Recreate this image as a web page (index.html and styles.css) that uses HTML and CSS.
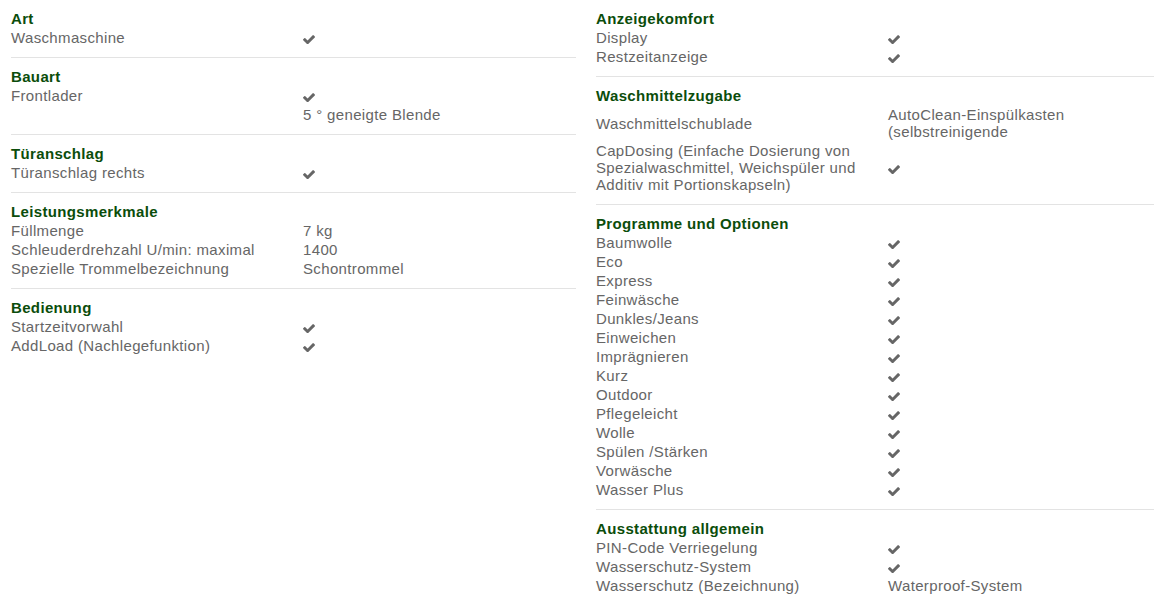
FILE: index.html
```html
<!DOCTYPE html>
<html lang="de">
<head>
<meta charset="utf-8">
<title>Technische Daten</title>
<link rel="stylesheet" href="styles.css">
</head>
<body>
<svg style="display:none" xmlns="http://www.w3.org/2000/svg">
  <symbol id="chk" viewBox="121 370 1550 1056"><path d="M1671 566q0 40-28 68l-724 724-136 136q-28 28-68 28t-68-28l-136-136-362-362q-28-28-28-68t28-68l136-136q28-28 68-28t68 28l294 295 656-657q28-28 68-28t68 28l136 136q28 28 28 68z"/></symbol>
</svg>
<div class="specs">
  <div class="col">
    <section class="group">
      <h3>Art</h3>
      <div class="row"><div class="label">Waschmaschine</div><div class="value"><svg class="check"><use href="#chk"/></svg></div></div>
    </section>
    <section class="group">
      <h3>Bauart</h3>
      <div class="row"><div class="label">Frontlader</div><div class="value"><svg class="check"><use href="#chk"/></svg></div></div>
      <div class="row"><div class="label"></div><div class="value">5 ° geneigte Blende</div></div>
    </section>
    <section class="group">
      <h3>Türanschlag</h3>
      <div class="row"><div class="label">Türanschlag rechts</div><div class="value"><svg class="check"><use href="#chk"/></svg></div></div>
    </section>
    <section class="group">
      <h3>Leistungsmerkmale</h3>
      <div class="row"><div class="label">Füllmenge</div><div class="value">7 kg</div></div>
      <div class="row"><div class="label">Schleuderdrehzahl U/min: maximal</div><div class="value">1400</div></div>
      <div class="row"><div class="label">Spezielle Trommelbezeichnung</div><div class="value">Schontrommel</div></div>
    </section>
    <section class="group">
      <h3>Bedienung</h3>
      <div class="row"><div class="label">Startzeitvorwahl</div><div class="value"><svg class="check"><use href="#chk"/></svg></div></div>
      <div class="row"><div class="label">AddLoad (Nachlegefunktion)</div><div class="value"><svg class="check"><use href="#chk"/></svg></div></div>
    </section>
  </div>
  <div class="col">
    <section class="group">
      <h3>Anzeigekomfort</h3>
      <div class="row"><div class="label">Display</div><div class="value"><svg class="check"><use href="#chk"/></svg></div></div>
      <div class="row"><div class="label">Restzeitanzeige</div><div class="value"><svg class="check"><use href="#chk"/></svg></div></div>
    </section>
    <section class="group">
      <h3>Waschmittelzugabe</h3>
      <div class="row"><div class="label">Waschmittelschublade</div><div class="value">AutoClean-Einspülkasten (selbstreinigende</div></div>
      <div class="row"><div class="label">CapDosing (Einfache Dosierung von Spezialwaschmittel, Weichspüler und Additiv mit Portionskapseln)</div><div class="value"><svg class="check"><use href="#chk"/></svg></div></div>
    </section>
    <section class="group">
      <h3>Programme und Optionen</h3>
      <div class="row"><div class="label">Baumwolle</div><div class="value"><svg class="check"><use href="#chk"/></svg></div></div>
      <div class="row"><div class="label">Eco</div><div class="value"><svg class="check"><use href="#chk"/></svg></div></div>
      <div class="row"><div class="label">Express</div><div class="value"><svg class="check"><use href="#chk"/></svg></div></div>
      <div class="row"><div class="label">Feinwäsche</div><div class="value"><svg class="check"><use href="#chk"/></svg></div></div>
      <div class="row"><div class="label">Dunkles/Jeans</div><div class="value"><svg class="check"><use href="#chk"/></svg></div></div>
      <div class="row"><div class="label">Einweichen</div><div class="value"><svg class="check"><use href="#chk"/></svg></div></div>
      <div class="row"><div class="label">Imprägnieren</div><div class="value"><svg class="check"><use href="#chk"/></svg></div></div>
      <div class="row"><div class="label">Kurz</div><div class="value"><svg class="check"><use href="#chk"/></svg></div></div>
      <div class="row"><div class="label">Outdoor</div><div class="value"><svg class="check"><use href="#chk"/></svg></div></div>
      <div class="row"><div class="label">Pflegeleicht</div><div class="value"><svg class="check"><use href="#chk"/></svg></div></div>
      <div class="row"><div class="label">Wolle</div><div class="value"><svg class="check"><use href="#chk"/></svg></div></div>
      <div class="row"><div class="label">Spülen /Stärken</div><div class="value"><svg class="check"><use href="#chk"/></svg></div></div>
      <div class="row"><div class="label">Vorwäsche</div><div class="value"><svg class="check"><use href="#chk"/></svg></div></div>
      <div class="row"><div class="label">Wasser Plus</div><div class="value"><svg class="check"><use href="#chk"/></svg></div></div>
    </section>
    <section class="group">
      <h3>Ausstattung allgemein</h3>
      <div class="row"><div class="label">PIN-Code Verriegelung</div><div class="value"><svg class="check"><use href="#chk"/></svg></div></div>
      <div class="row"><div class="label">Wasserschutz-System</div><div class="value"><svg class="check"><use href="#chk"/></svg></div></div>
      <div class="row"><div class="label">Wasserschutz (Bezeichnung)</div><div class="value">Waterproof-System</div></div>
    </section>
  </div>
</div>
</body>
</html>
```

FILE: styles.css
```css
html, body {
  margin: 0;
  padding: 0;
  background: #fff;
  overflow: hidden;
}
body {
  font-family: "Liberation Sans", Arial, sans-serif;
  font-size: 15px;
  letter-spacing: 0.35px;
  color: #666;
}
.specs {
  display: grid;
  grid-template-columns: 565px 1fr;
  column-gap: 20px;
  padding-left: 11px;
  align-items: start;
}
.group {
  padding: 9px 0 10px;
  border-bottom: 1px solid #e3e3e3;
}
.col .group:last-child {
  border-bottom: none;
}
.group h3 {
  margin: 0;
  font-size: 15px;
  font-weight: bold;
  line-height: 19px;
  color: #0b4d0b;
}
.row {
  display: grid;
  grid-template-columns: 292px 1fr;
  align-items: center;
  line-height: 17px;
  padding: 1px 0;
}
.label {
  padding-right: 10px;
}
.check {
  width: 12px;
  height: 9px;
  fill: #666;
  vertical-align: -1px;
}
```
